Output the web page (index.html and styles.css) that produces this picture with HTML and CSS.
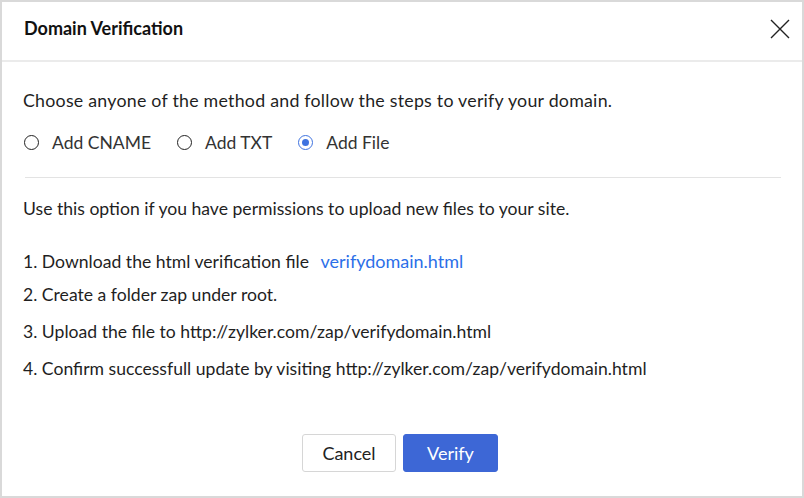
FILE: index.html
```html
<!DOCTYPE html>
<html lang="en">
<head>
    <meta charset="UTF-8">
    <title>Domain Verification</title>
    <link rel="stylesheet" href="styles.css">
</head>
<body>
    <div class="dialog">
        <div class="dialog-header">
            <div class="dialog-title">Domain Verification</div>
            <svg class="close" width="20" height="20" viewBox="0 0 20 20">
                <path d="M1 1 L19 19 M19 1 L1 19" stroke="#222" stroke-width="1.4" fill="none"/>
            </svg>
        </div>

        <div class="dialog-body">
            <p class="intro">Choose anyone of the method and follow the steps to verify your domain.</p>
            <div class="methods">
                <label class="method"><span class="radio"></span>Add CNAME</label>
                <label class="method"><span class="radio"></span>Add TXT</label>
                <label class="method"><span class="radio checked"></span>Add File</label>
            </div>
            <div class="divider"></div>
            <p class="note">Use this option if you have permissions to upload new files to your site.</p>
            <ol class="steps">
                <li class="step-1">1. Download the html verification file <a href="#" class="file-link">verifydomain.html</a></li>
                <li class="step-2">2. Create a folder zap under root.</li>
                <li class="step-3">3. Upload the file to http://zylker.com/zap/verifydomain.html</li>
                <li class="step-4">4. Confirm successfull update by visiting http://zylker.com/zap/verifydomain.html</li>
            </ol>
        </div>

        <div class="dialog-footer">
            <button class="btn btn-cancel">Cancel</button>
            <button class="btn btn-verify">Verify</button>
        </div>
    </div>
</body>
</html>
```

FILE: styles.css
```css
body {
    margin: 0;
    font-family: Lato, "Liberation Sans", sans-serif;
    color: #1f1f1f;
    background: #fff;
}
.dialog {
    width: 804px;
    height: 498px;
    box-sizing: border-box;
    border: 2px solid #d9d9d9;
    display: flex;
    flex-direction: column;
}
.dialog-header {
    height: 58px;
    border-bottom: 2px solid #ebebeb;
    display: flex;
    align-items: flex-start;
    justify-content: space-between;
    padding: 0 12px 0 22px;
}
.dialog-title {
    font-size: 18px;
    line-height: 22px;
    margin-top: 15px;
    font-weight: bold;
    color: #111;
}
.close {
    margin-top: 17px;
}
.dialog-body {
    padding: 0 21px;
    flex: 1;
}
.intro {
    margin: 27px 0 0;
    font-size: 17.8px;
    line-height: 22px;
    letter-spacing: 0.24px;
}
.methods {
    display: flex;
    margin-top: 20px;
    height: 22px;
    align-items: center;
}
.method {
    display: flex;
    align-items: center;
    font-size: 17.5px;
    color: #333;
    margin-right: 25px;
}
.radio {
    width: 13px;
    height: 13px;
    border: 1.5px solid #222;
    border-radius: 50%;
    margin: 0 13px 0 1px;
    position: relative;
}
.radio.checked {
    border-color: #3f73e0;
}
.radio.checked::after {
    content: "";
    position: absolute;
    left: 3px;
    top: 3px;
    width: 7px;
    height: 7px;
    border-radius: 50%;
    background: #3f73e0;
}
.divider {
    height: 1px;
    background: #e3e3e3;
    margin: 24px 0 0 2px;
}
.note {
    margin: 20px 0 0;
    font-size: 17.6px;
    line-height: 22px;
}
.steps {
    list-style: none;
    margin: 30px 0 0;
    padding: 0;
    font-size: 17.6px;
    line-height: 22px;
}
.steps li {
    margin-bottom: 15px;
}
.steps .step-1 {
    margin-bottom: 11px;
}
.file-link {
    color: #2c6fe8;
    text-decoration: none;
    margin-left: 7px;
    font-size: 18px;
}
.dialog-footer {
    display: flex;
    justify-content: center;
    gap: 7px;
    padding-bottom: 24px;
    padding-right: 4px;
}
.btn {
    height: 38px;
    font-family: Lato, "Liberation Sans", sans-serif;
    font-size: 18px;
    border-radius: 3px;
    cursor: pointer;
}
.btn-cancel {
    width: 94px;
    background: #fff;
    color: #222;
    border: 1px solid #d6d6d6;
}
.btn-verify {
    width: 95px;
    background: #3d67d6;
    color: #fff;
    border: 1px solid #3d67d6;
}
```
